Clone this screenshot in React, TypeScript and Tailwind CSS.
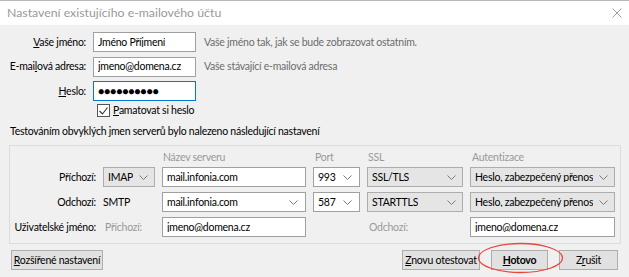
import React from "react";

function Chevron({ className = "" }: { className?: string }) {
  return (
    <svg width="9" height="5" viewBox="0 0 9 5" className={`shrink-0 ${className}`} aria-hidden="true">
      <path d="M0.5 0.5 L4.5 4.5 L8.5 0.5" fill="none" stroke="#7a7a7a" strokeWidth="1" />
    </svg>
  );
}

function TextBox({ value, combo, focus }: { value: string; combo?: boolean; focus?: boolean }) {
  return (
    <div
      className={`flex h-5 items-center justify-between border bg-white pl-[4px] pr-[7px] text-black ${
        focus ? "border-[#0078d7]" : "border-[#a0a0a0]"
      }`}
    >
      <span className="truncate">{value}</span>
      {combo ? <Chevron /> : null}
    </div>
  );
}

function Select({ value }: { value: string }) {
  return (
    <div className="flex h-5 items-center justify-between border border-[#adadad] bg-[#e5e5e5] pl-[4px] pr-[6px] text-black">
      <span className="truncate">{value}</span>
      <Chevron />
    </div>
  );
}

function Button({ children, bold, className = "" }: { children: React.ReactNode; bold?: boolean; className?: string }) {
  return (
    <button
      className={`flex h-5 items-center justify-center border border-[#adadad] bg-[#e1e1e1] text-black ${
        bold ? "font-bold" : ""
      } ${className}`}
    >
      {children}
    </button>
  );
}

export default function App() {
  return (
    <div className="relative h-[277px] w-[629px] overflow-hidden whitespace-nowrap bg-[#f0f0f0] font-['Lato',sans-serif] text-[10.5px] leading-none tracking-[-0.25px] text-black">
      {/* title bar */}
      <div className="flex h-[25px] items-center justify-between border-t border-[#b9b9b9] bg-white pl-[7px] pr-[7px]">
        <span className="text-[12.3px] tracking-normal text-[#999]">Nastavení existujícího e-mailového účtu</span>
        <svg width="10" height="10" viewBox="0 0 10 10" aria-hidden="true">
          <path d="M0.5 0.5 L9.5 9.5 M9.5 0.5 L0.5 9.5" stroke="#a0a0a0" strokeWidth="1" />
        </svg>
      </div>

      {/* account fields */}
      <div className="grid grid-cols-[86px_103px_1fr] items-center gap-x-[7px] gap-y-[4.5px] pt-[7px]">
        <span className="text-right">
          <u>V</u>aše jméno:
        </span>
        <TextBox value="Jméno Příjmení" />
        <span className="pl-px text-[#6d6d6d]">Vaše jméno tak, jak se bude zobrazovat ostatním.</span>

        <span className="text-right">
          E-mai<u>l</u>ová adresa:
        </span>
        <TextBox value="jmeno@domena.cz" />
        <span className="pl-px text-[#6d6d6d]">Vaše stávající e-mailová adresa</span>

        <span className="text-right">
          <u>H</u>eslo:
        </span>
        <TextBox value="●●●●●●●●●●" focus />
        <span />
      </div>

      <label className="ml-[97px] mt-[3px] flex items-center gap-[3px]">
        <span className="flex h-[13px] w-[13px] items-center justify-center border border-[#555] bg-white">
          <svg width="9" height="8" viewBox="0 0 9 8" aria-hidden="true">
            <path d="M0.5 4 L3.5 7 L8.5 0.5" fill="none" stroke="#333" strokeWidth="1.1" />
          </svg>
        </span>
        <span>
          <u>P</u>amatovat si heslo
        </span>
      </label>

      <p className="ml-[10px] mt-[9px]">Testováním obvyklých jmen serverů bylo nalezeno následující nastavení</p>

      {/* server settings */}
      <div className="ml-[9px] mt-[8px] w-[612px] border border-[#dcdcdc] pb-[6px]">
        <div className="grid grid-cols-[86px_52px_144px_47px_96px_145px] items-center gap-x-[7px] gap-y-[5px]">
          <span />
          <span />
          <span className="pl-px pt-[6px] text-[#999]">Název serveru</span>
          <span className="pl-[2px] pt-[6px] text-[#999]">Port</span>
          <span className="pl-px pt-[6px] text-[#999]">SSL</span>
          <span className="pl-[2px] pt-[6px] text-[#999]">Autentizace</span>

          <span className="text-right">Příchozí:</span>
          <Select value="IMAP" />
          <TextBox value="mail.infonia.com" />
          <TextBox value="993" combo />
          <Select value="SSL/TLS" />
          <Select value="Heslo, zabezpečený přenos" />

          <span className="text-right">Odchozí:</span>
          <span>SMTP</span>
          <TextBox value="mail.infonia.com" combo />
          <TextBox value="587" combo />
          <Select value="STARTTLS" />
          <Select value="Heslo, zabezpečený přenos" />

          <span className="text-right">Uživatelské jméno:</span>
          <span className="pl-[2px] text-[#999]">Příchozí:</span>
          <TextBox value="jmeno@domena.cz" />
          <span />
          <span className="pl-[2px] text-[#999]">Odchozí:</span>
          <TextBox value="jmeno@domena.cz" />
        </div>
      </div>

      {/* buttons */}
      <div className="mt-[6px] flex items-center pl-[11px] pr-[11px]">
        <Button className="w-[92px]">
          <span>
            <u>R</u>ozšířené nastavení
          </span>
        </Button>
        <div className="ml-auto flex gap-[11px]">
          <Button className="w-[78px]">
            <span>
              <u>Z</u>novu otestovat
            </span>
          </Button>
          <Button className="w-[57px]" bold>
            <span>
              <u>H</u>otovo
            </span>
          </Button>
          <Button className="w-[59px]">
            <span>
              Z<u>r</u>ušit
            </span>
          </Button>
        </div>
      </div>

      {/* annotation ellipse */}
      <svg className="absolute left-[477px] top-[242px]" width="87" height="32" viewBox="0 0 87 32" aria-hidden="true">
        <ellipse cx="43.5" cy="16" rx="42" ry="14.5" fill="none" stroke="#e8463c" strokeWidth="1.3" />
      </svg>
    </div>
  );
}
